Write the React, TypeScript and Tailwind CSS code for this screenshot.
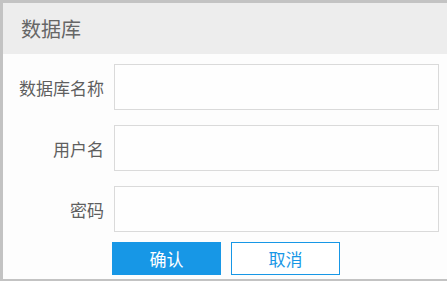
export default function App() {
  const font = { fontFamily: '"Noto Sans CJK SC", "Noto Sans", sans-serif' };
  const rows = ["数据库名称", "用户名", "密码"];
  return (
    <div
      className="w-[447px] h-[281px] overflow-hidden bg-[#c3c3c3] pt-[3px] pl-[3px]"
      style={font}
    >
      <div className="w-[460px] h-[276px] bg-[#fdfdfd] flex flex-col">
        <div className="h-[51px] bg-[#ededed] flex items-center pl-[18px]">
          <span className="text-[20px] leading-none text-[#666666]">数据库</span>
        </div>
        <div className="flex flex-col gap-[15px] pt-[10px]">
          {rows.map((r) => (
            <div key={r} className="flex items-center">
              <div className="w-[101px] text-right text-[17px] leading-none text-[#5f5f5f]">{r}</div>
              <div className="ml-[10px] w-[325px] h-[46px] border border-[#dadada] bg-[#fefefe]" />
            </div>
          ))}
        </div>
        <div className="flex gap-[10px] pl-[109px] mt-[10px]">
          <button className="w-[109px] h-[33px] bg-[#1797e6] text-white text-[17px] leading-none">确认</button>
          <button className="w-[109px] h-[33px] border border-[#1797e6] bg-white text-[#1797e6] text-[17px] leading-none">取消</button>
        </div>
      </div>
    </div>
  );
}
